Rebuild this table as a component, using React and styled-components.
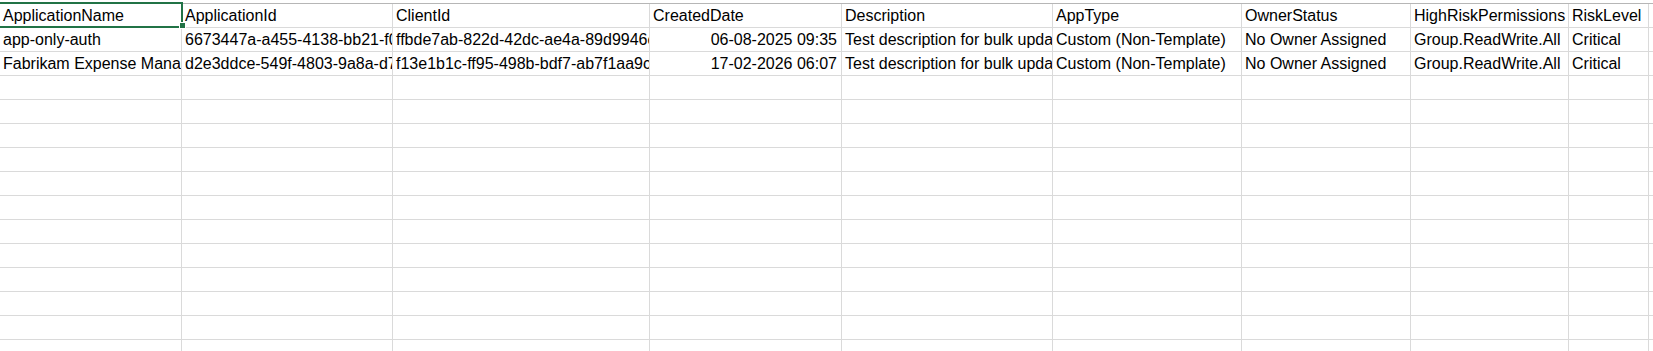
import styled, { createGlobalStyle } from 'styled-components';

const GlobalStyle = createGlobalStyle`
    html, body {
        margin: 0;
        padding: 0;
        background: #ffffff;
        overflow: hidden;
    }
    body {
        font-family: "Liberation Sans", Arial, sans-serif;
    }
`;

const COLUMN_WIDTHS = [182, 211, 257, 192, 211, 189, 169, 158, 80];
const ROW_COUNT = 15;

const HEADERS = [
    'ApplicationName', 'ApplicationId', 'ClientId', 'CreatedDate', 'Description',
    'AppType', 'OwnerStatus', 'HighRiskPermissions', 'RiskLevel', '',
];

const DATA = [
    ['app-only-auth', '6673447a-a455-4138-bb21-f0c2d8e1a9b4', 'ffbde7ab-822d-42dc-ae4a-89d9946c1e02', '06-08-2025 09:35',
        'Test description for bulk update', 'Custom (Non-Template)', 'No Owner Assigned', 'Group.ReadWrite.All', 'Critical', ''],
    ['Fabrikam Expense Management', 'd2e3ddce-549f-4803-9a8a-d7c61b0e4f35', 'f13e1b1c-ff95-498b-bdf7-ab7f1aa9c3d8', '17-02-2026 06:07',
        'Test description for bulk update', 'Custom (Non-Template)', 'No Owner Assigned', 'Group.ReadWrite.All', 'Critical', ''],
];

// column 3 (CreatedDate) holds date values, which the sheet right-aligns
const RIGHT_ALIGNED = [3];

const SheetArea = styled.div`
    position: relative;
    padding-top: 3px;
    height: 351px;
    box-sizing: border-box;
    overflow: hidden;
`;

const Grid = styled.div`
    display: grid;
    grid-template-columns: ${(props) => props.columns.map((w) => `${w}px`).join(' ')} 1fr;
    grid-auto-rows: 24px;
    border-top: 1px solid #b6b6b6;
`;

const Cell = styled.div`
    box-sizing: border-box;
    border-right: 1px solid #dadada;
    border-bottom: 1px solid #dadada;
    padding: 0 4px 0 3px;
    font-size: 16px;
    line-height: 23px;
    color: #000000;
    white-space: nowrap;
    overflow: hidden;
    text-align: ${(props) => props.right ? 'right' : 'left'};
`;

const Selection = styled.div`
    position: absolute;
    top: 2px;
    left: -2px;
    width: 185px;
    height: 26px;
    box-sizing: border-box;
    border: 2px solid #217346;
    pointer-events: none;
`;

const FillHandle = styled.div`
    position: absolute;
    top: 23px;
    left: 180px;
    width: 5px;
    height: 5px;
    background: #217346;
    outline: 1px solid #ffffff;
`;


const App = () => {
    const rows = [HEADERS, ...DATA];
    while (rows.length < ROW_COUNT) rows.push(HEADERS.map(() => ''));

    return (
        <>
            <GlobalStyle />
            <SheetArea>
                <Grid columns={COLUMN_WIDTHS}>
                    {rows.map((row, r) => row.map((value, c) => (
                        <Cell key={`${r}-${c}`} right={r > 0 && RIGHT_ALIGNED.includes(c)}>{value}</Cell>
                    )))}
                </Grid>
                <Selection />
                <FillHandle />
            </SheetArea>
        </>
    );
};

export default App;
